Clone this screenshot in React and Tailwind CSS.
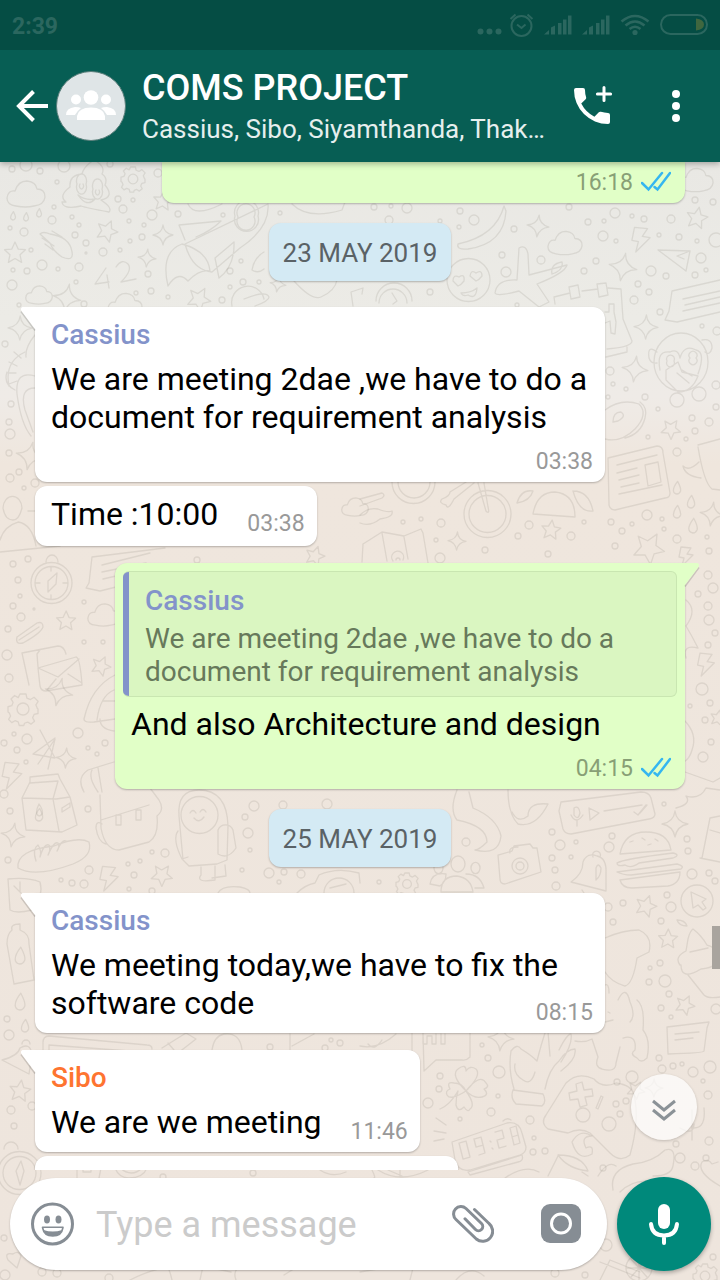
import React from "react";

/* ---------- wallpaper ---------- */

const circles = [
  [12, 169, 3], [26, 165, 6], [40, 171, 3], [64, 166, 6], [110, 164, 3], [57, 182, 2], [158, 173, 4],
  [54, 207, 2], [118, 199, 3], [133, 200, 2], [123, 209, 4], [52, 220, 4], [72, 217, 2], [79, 225, 2],
  [10, 228, 2], [24, 232, 4], [75, 235, 3], [31, 250, 2], [86, 243, 3], [86, 253, 1], [103, 252, 4],
  [129, 221, 2], [144, 225, 2], [130, 241, 2], [142, 237, 3], [120, 250, 2], [42, 265, 5], [79, 267, 4],
  [58, 269, 2], [13, 270, 2], [27, 271, 3], [12, 285, 5], [76, 282, 2], [148, 274, 3], [136, 293, 2],
  [151, 291, 3], [168, 297, 2], [222, 300, 3], [223, 215, 2], [152, 215, 5], [178, 214, 3], [230, 271, 3],
  [241, 261, 2], [243, 282, 3], [230, 287, 2], [259, 282, 2], [280, 213, 2], [19, 305, 2], [84, 304, 3],
  [374, 207, 3], [391, 206, 2], [407, 208, 5], [389, 220, 4], [440, 221, 2], [460, 211, 3], [474, 220, 5],
  [459, 227, 2], [514, 229, 3], [569, 207, 3], [588, 222, 3], [604, 221, 2], [615, 213, 5], [632, 216, 2],
  [644, 219, 3], [671, 219, 4], [695, 200, 3], [713, 202, 3], [603, 236, 5], [616, 241, 2], [659, 235, 2],
  [679, 237, 3], [697, 241, 2], [716, 240, 7], [502, 255, 3], [541, 260, 4], [506, 272, 5], [596, 261, 3],
  [584, 271, 3], [651, 271, 5], [666, 276, 3], [701, 258, 5], [706, 270, 2], [695, 275, 3], [638, 284, 3],
  [649, 292, 3], [634, 300, 4], [660, 312, 3], [702, 326, 2], [717, 331, 4], [430, 292, 3], [517, 305, 2],
  [610, 371, 4], [613, 384, 2], [626, 389, 2], [645, 397, 3], [608, 397, 2], [658, 409, 2], [716, 407, 3],
  [692, 418, 3], [709, 422, 4], [648, 437, 2], [686, 439, 2], [695, 431, 3], [677, 452, 4], [716, 385, 4],
  [5, 344, 3], [11, 404, 3], [9, 422, 3], [10, 434, 5], [9, 453, 3], [19, 472, 3], [10, 478, 4], [24, 488, 2],
  [35, 483, 4], [13, 564, 3], [28, 559, 3], [18, 580, 3], [20, 596, 2], [13, 606, 3], [34, 609, 1],
  [21, 617, 4], [8, 629, 3], [84, 602, 2], [84, 642, 2], [103, 642, 2], [7, 655, 5], [9, 678, 4], [78, 733, 5],
  [27, 739, 5], [14, 734, 2], [17, 750, 3], [4, 743, 3], [88, 748, 2], [105, 743, 3], [97, 754, 2], [26, 762, 2],
  [4, 794, 4], [10, 811, 3], [88, 809, 3], [197, 560, 3], [403, 522, 2], [421, 519, 2], [441, 523, 4],
  [436, 540, 2], [485, 550, 3], [518, 536, 3], [529, 525, 4], [571, 536, 4], [584, 522, 2], [611, 522, 3],
  [622, 531, 3], [632, 524, 2], [647, 515, 5], [662, 519, 2], [664, 529, 2], [677, 539, 4], [615, 546, 3],
  [548, 554, 3], [440, 558, 5], [707, 537, 2], [709, 551, 3], [708, 575, 4], [713, 588, 5], [698, 594, 3],
  [708, 606, 4], [709, 620, 5], [715, 633, 3], [708, 645, 3], [702, 689, 6], [710, 703, 3], [690, 706, 2],
  [705, 720, 3], [711, 742, 3], [703, 757, 5], [254, 806, 5], [245, 817, 3], [248, 833, 5], [250, 850, 2],
  [283, 805, 4], [327, 804, 5], [152, 852, 2], [165, 853, 4], [140, 861, 2], [128, 864, 2], [134, 875, 3],
  [89, 870, 4], [61, 880, 2], [72, 883, 3], [84, 884, 4], [129, 889, 2], [152, 891, 3], [242, 870, 2],
  [269, 873, 5], [301, 874, 4], [284, 872, 3], [279, 882, 2], [8, 860, 3], [466, 842, 4], [552, 832, 3],
  [560, 845, 5], [576, 842, 2], [552, 858, 3], [571, 857, 2], [555, 870, 3], [556, 886, 4], [609, 847, 5],
  [612, 836, 3], [664, 804, 2], [687, 839, 3], [688, 851, 3], [692, 874, 5], [709, 873, 3], [715, 881, 3],
  [379, 882, 2], [608, 907, 4], [623, 903, 3], [671, 907, 5], [667, 895, 3], [661, 921, 3], [613, 922, 3],
  [660, 963, 3], [650, 968, 2], [649, 982, 3], [665, 981, 6], [669, 994, 3], [661, 1008, 3], [671, 1017, 2],
  [716, 1009, 5], [7, 1019, 3], [9, 1035, 5], [331, 1040, 2], [340, 1043, 3], [325, 1048, 3], [270, 1047, 3],
  [482, 1045, 2], [488, 1058, 3], [499, 1072, 6], [440, 1076, 3], [439, 1089, 3], [428, 1103, 5],
  [498, 1096, 2], [491, 1112, 4], [530, 1120, 4], [460, 1119, 2], [534, 1138, 2], [533, 1152, 3], [545, 1151, 3],
  [659, 1058, 3], [662, 1069, 4], [673, 1066, 3], [682, 1064, 2], [693, 1072, 5], [710, 1067, 6], [632, 1077, 6],
  [617, 1082, 3], [703, 1081, 2], [708, 1095, 4], [616, 1104, 3], [626, 1101, 3], [620, 1114, 3], [709, 1141, 4],
  [676, 1144, 3], [706, 1158, 3], [680, 1158, 5], [695, 1166, 4], [603, 1168, 3], [11, 1110, 4], [14, 1126, 3],
  [32, 1106, 4], [253, 1173, 3], [163, 1177, 3], [4, 1238, 3], [5, 1275, 5], [42, 1272, 4], [57, 1273, 4],
  [109, 1278, 4], [606, 1245, 6], [555, 1273, 4], [585, 1275, 3], [713, 1257, 3],
];

const stars = [
  [15, 253, 11], [107, 231, 11], [163, 201, 10], [199, 299, 12], [697, 218, 11], [671, 429, 10], [315, 556, 10],
  [66, 621, 10], [101, 666, 10], [551, 530, 10], [649, 548, 16], [718, 718, 8], [162, 875, 11], [646, 906, 11],
  [668, 939, 10], [685, 1005, 10], [20, 1091, 11], [636, 1090, 9],
];

const sparkles = [
  [163, 235, 10], [147, 258, 9], [67, 298, 14], [20, 328, 12], [538, 226, 11], [623, 267, 14], [646, 327, 12],
  [635, 369, 13], [30, 456, 14], [457, 541, 9], [712, 514, 12], [59, 692, 14], [66, 758, 10], [13, 835, 12],
  [675, 824, 13], [501, 1038, 13], [278, 284, 8], [654, 1088, 9],
];

const clouds = [
  [26, 194, 20], [39, 295, 14], [565, 243, 18], [696, 180, 18], [355, 507, 14], [104, 615, 17], [125, 305, 18],
];

const bolts = [[641, 239, 13], [12, 775, 14], [109, 878, 13], [706, 664, 12], [686, 556, 10]];

const gears = [[133, 179, 12], [23, 709, 15], [407, 884, 11], [705, 1276, 12]];

const drops = [
  [13, 216, 4], [26, 217, 4], [39, 213, 4], [677, 488, 6], [677, 512, 6], [691, 502, 6], [693, 526, 7],
  [39, 815, 6], [20, 956, 8], [20, 1002, 8], [25, 1026, 6],
];

const drawings = [
  // smiling swirl
  "M66 202q-8-6 4-15q-1-12 12-13q2-8 12-14q12 6 8 14q6 4 3 11q10 12-4 15q12 8 8 12q-22-4-28-6q-18 4-19-4z M77 184a5 7 0 1 0 9 0a5 7 0 1 0-9 0 M93 189a5 7 0 1 0 9 0a5 7 0 1 0-9 0 M80 184a2 3 0 1 0 3 0 M96 190a2 3 0 1 0 3 0 M78 195q8 6 17 4q-8 9-17-4",
  // mitten
  "M40 234q3-3 10 0q20 3 22 18q2 10-10 5q-9-6-12-14z M42 238l12 8 M45 244l8 6 M52 231l10 6",
  // 42
  "M106 268l-11 16 14-2 M107 275l2 13 M116 267q6-9 12-3q5 6-7 18l15-3",
  // rocket
  "M185 240l-6-15 42-4q-10 10-25 16 M268 204q2 24-28 44l-28 24q-20-2-27-28z M238 217a9 9 0 1 0 16 0a9 9 0 1 0-16 0 M235 216a12 12 0 1 0 23 0a12 12 0 1 0-23 0 M234 242l-19 16 4 20q16-12 15-36 M182 244q-22 8-14 42q10-16 20-5q12-12 22-10q-2-20-28-27 M188 204q6 14 34 0 M292 204q16 16 50 6l3-8",
  // banana
  "M504 206q-8 30-46 38q-2 6 10 5q36-5 38-38z",
  // heart-eyed face
  "M447 280a21 21 0 1 0 43 0a21 21 0 1 0-43 0 M453 281q0-7 6-4q6-4 5 4q-3 4-6 5z M470 276q1-7 6-3q6-4 6 3q-3 4-6 5z M461 293q10 0 16-5q-1 12-9 7q-5 2-7-2",
  // plane
  "M517 280l2-32q7-4 9 6l1 21 38-10q-2 8-30 19l12 18-10 5-20-16q-22 6-24 2q2-14 22-13z M552 274q-2-10 10-12q2 8-10 12",
  // calendar
  "M555 304l-1-7 16-4 M582 291l16-2 M608 288l13 1 2 30 9 22q0 6-25 8 M569 287l9-2 2 12-9 2z M597 284l9-1 2 12-9 2z M605 312h4v-8h5v8l2 10-1 12-4-1-1-12-5 2 M606 357l21-5v-5",
  // speech note
  "M720 280l-48 11-3 20-4 9 12 2 43-10 M683 299l37-8 M685 305l35-8 M683 311l37-8",
  // monkey
  "M654 362a27 29 0 1 0 54 0a27 29 0 1 0-54 0 M657 352q-10-8-8 6q2 6 8 5 M702 340q10-2 10 8q-2 8-7 4 M660 370q-4-20 10-18q8-4 10 6q4-14 16-8q10 2 2 24 M667 361a4 4 0 1 0 7 0a4 4 0 1 0-7 0 M690 358a4 4 0 1 0 6 0a4 4 0 1 0-6 0 M666 380l12 12q14 0 20-16l-16-4-4-10-12 8z M677 373l12 10 M682 370l10 6 M670 400a7 7 0 1 0 14 0a7 7 0 1 0-14 0 M692 394a7 7 0 1 0 14 0a7 7 0 1 0-14 0",
  // paper dart
  "M658 250l32 1-4 20z M690 251l-13 5 7 3",
  // planet
  "M232 306a16 16 0 0 1 32-7 M244 299q22-9 25-2q0 4-14 9",
  // heart and alarm clock
  "M294 281q18 20 27 16q14-6 16-17 M376 301a18 18 0 0 1 36 0 M379 303a14 14 0 0 1 28 0 M392 293l5 8-4 3 M353 306l-2-14 12-4-1 6 M252 270q2-12 12-18 M252 270q6 4 12-1",
  // doughnut
  "M605 410q16-12 34-6q10 10-4 25q-14 14-30 10 M613 422q0-10 8-10q6 4-3 9z M640 402q8 6 5 16q-4 16-20 20",
  // newspaper
  "M608 458l49-12q6 0 6 7l7 40q0 5-5 5l-50 12q-5 0-6-5z M617 465l40-10 M617 473l20-5 M619 480l20-5 M621 487l18-4 M645 465l13-3 3 20-13 4z M619 494l43-9",
  // mug
  "M698 445l22-6 M698 447q6 36 14 42l8 1 M701 478q-16-2-18-12q6 6 16-4",
  // left edge: striped coil, pot, person
  "M35 335q-10 12-9 22 M9 386q-5-24 16-34 M7 372q-4 12 8 18 M14 352l7 6 M9 362l8 4 M8 373h8 M9 384l8-3 M35 376q-20-6-18 18q4 30 14 42 M35 388q-16 0-10 22l8 22 M3 508a9 11 0 1 1 19 0q-3 12-9 12q-8 0-10-12 M0 552l60-6 26-22 M0 540q4-14 18-18q14 2 18 24 M28 511h8",
  // bike and tools
  "M392 482a21 21 0 0 0 43 0 M398 482a16 16 0 0 0 32 0 M464 514a23 23 0 1 0 47 0a23 23 0 1 0-47 0 M469 514a18 18 0 1 0 37 0a18 18 0 1 0-37 0 M478 483l8 28q4 4 2-4l-4-24 M466 482l-16 10q0 4-8 7q-4 4 4 6q2 6 8-6l20-16 M360 499l22-6q4 2 0 5l-22 8 M360 515q8-8 18-6q10 4 14 2q2 6-12 8q-10 8-20 4",
  // sunrise
  "M533 514q4-22 22-22q20 2 20 25z M517 503q4-14 16-12q-3 10-16 12 M573 491q16 0 20 20q-14 2-20-20",
  // map
  "M362 562l1-18 19-12 22 4 17-7 2 4 5 30 M382 533l5 28 M404 537l4 22 M393 561a6 6 0 1 1 10-1 M396 560a2 2 0 1 1 4 0",
  // compass
  "M31 583a20 20 0 1 0 41 0a20 20 0 1 0-41 0 M35 583a16 16 0 1 0 33 0a16 16 0 1 0-33 0 M46 562a6 7 0 1 1 12 0 M57 573l-9 8 0 11 8-8z M51 567v4 M51 595v4 M36 583h4 M63 583h4",
  // speech bubble
  "M165 548l-73 9-3 26-3 5 14 3 16-4 M102 565l48-12 M102 572l44-9 M103 579l26-6",
  // clip and envelopes
  "M17 637l20-14q6-2 6 4q-2 6-20 16q-8 2-6-6z M19 640l20-13 M38 667l-1-13 3-4 M29 685l-7-32 36-7q6 0 8 8 M38 668l38-11q4 0 6 28l-36 6q-5 0-6-5z M38 668l20 9 21-18 M47 690l9-11 M82 683l-14-9",
  // shuttle
  "M115 675q-24 12-31 44q0 4 10 3l21-3 M114 690q-14 6-17 30 M100 719q0 10 14 12 M103 701h12",
  // bluetooth
  "M40 730l15 28-22-4 22-16 M38 764l17-25-7 30",
  // milk carton
  "M22 798l8-16v-5l28-3 2 5 10 18 7 28-15 7-36-2z M22 798l34 1 14-2 M30 783l28-2-5 18 6 32 M39 804q-5 10 0 12q7-2 0-12 M62 808l8-5v4l-8 5z",
  // backpack
  "M84 792q-8-14 4-22l26-8 M92 770q-4 8 6 22 M100 795l1 33q4 22 18 22l30-8q10-6 8-26q8-6 2-16l-12-16 M101 820l48-15 M102 824q-6-4-6 4q2 14 10 16 M116 815h5v10h-5z M136 810h5v10h-5z M98 768l4 24",
  // astronaut
  "M181 815a18 18 0 1 0 37 0a18 18 0 1 0-37 0 M179 816q-2-26 20-26q28 0 29 36l-1 34-10 4-28 2-6-6z M190 813q3-5 6 0 M200 812q3-5 6 0 M194 818q5 6 10-1 M218 830a8 8 0 0 1 15 0l3 18q-8 12-18 6z M178 831q-6 8 4 28l6-2 M201 867v8q-6 8 14 5v-14 M212 878l14-2-1-11",
  // bread
  "M18 868q-2-18 36-22q24-10 35-4q4 14-16 22q-38 14-55 4z M36 861q-4-12 2-16q4 6 2 12q4-14 9-12q2 6-1 10q6-14 10-12q2 4-1 8q5-12 9-10",
  // leaf and bottle
  "M8 879q20-2 32 3q4 14-8 28q-16 4-22 0z M14 886l14 14 M20 882v10 M12 930q-2-6 8-6v6q10 4 9 14l5 36-20 4-7-40q0-10 5-14z",
  // bell and laptop
  "M2 1060q16-4 18-12q10-6 12 6l-3 20z M22 1044a4 4 0 1 1 8 0 M43 1050l0-7q0-7 6-7l98 9q5 0 5 4 M49 1050v-5l80 6",
  // bandage and pear
  "M162 1048l24-15 10 6-18 14 M168 1043l6 7 M212 1050q2-14 12-16q16-2 18 16 M290 1050v-16 M292 1046l22-12",
  // ufo
  "M218 893q4-8 22-6q10 2 10 6 M297 893q8-8 18-10l4-8q18-8 40-2l1 10 M324 893a14 14 0 0 1 30 0 M330 888l16-4",
  // dinosaur and whale
  "M457 790q-8 20 0 30q30 6 30 22q-8 8-12 8q24 6 26-14q-4-18-28-28l-4-16 M508 790q0 24 10 34q18 4 30-20q-20-2-20 12q-10 8-16-4",
  // voice note
  "M559 811l2-9 80-10q8 0 10 6l4 16q0 4-6 5l-78 15q-6 0-8-5z M574 808q5-3 6 5q-2 8-6 2z M571 815q5 10 12 0 M577 820v6 M589 808l10 5-9 7z M604 811l38-6 M634 812l4 3 8-10 M640 813l7-8",
  // camera
  "M498 855l14-4 2-5 16-2 3 4 4 0 4 24-36 12q-5 0-5-5z M512 866a8 8 0 1 0 16 0a8 8 0 1 0-16 0 M516 866a4 4 0 1 0 8 0a4 4 0 1 0-8 0 M510 853q-2-6 8-6",
  // group
  "M441 892q0-16 16-16q14 2 16 16z M451 864a7 8 0 1 0 14 0a7 8 0 1 0-14 0 M434 868a4 5 0 1 0 9 0a4 5 0 1 0-9 0 M471 868a4 5 0 1 0 9 0a4 5 0 1 0-9 0 M430 884q2-12 16-10q0 8-6 12z M466 874q14 0 18 14l-9 0",
  // bell
  "M571 882q12-8 12-20q4-10 14-6q10 2 9 18v17z M593 857a4 4 0 1 1 7 0 M596 868q2-6 5 0q0 8-5 12z M582 890q4 8 10 4",
  // burger
  "M620 854q4-22 26-22q22 0 25 18z M617 863q6-4 56-10q8 2 0 5l-34 5q-8 6-14 2q-8 2-8-2 M617 872l60-8q8 2 4 5l-50 6q-8 0-14-3 M620 880l60-8q0 12-12 14l-36 2q-10 0-12-8 M630 842l3-1 M642 838l3 2 M655 839l3 2 M648 845l3-1",
  // cursor badge
  "M681 901a16 16 0 1 0 32 0a16 16 0 1 0-32 0 M691 892l2 16 5-3 5 5 3-2-4-6 4-3z",
  // boat and cup at the right edge
  "M685 772l28 10 7-4 M676 808q16-4 10-12q14 4 20-8l14 2 M702 858l8-40 10-2 M700 858l20 4 M710 830l10 3",
  // tree at the right edge
  "M686 600q12 10 0 26q6 10 12 22q-16-4-12 10 M684 720q14 14 8 30q-2 8-8 12",
  // balloon, dog
  "M605 938q18-8 34-8q14 6 10 22l-12 6q-4 26-12 28q-14-4-20-14 M605 985q4-2 4 8 M618 1000q8-16 12 2q6 14 0 20 M575 1041q10 2 17-2l6 18q-4 10 4 12q14 4 14-6l4-16 M637 1000q8 6 6 30q8 10 4 28q-6 6-10 0q-8-4-2-8q2-16-12-12 M608 1012l2 1 M613 1020l-8 2",
  // ice cream
  "M680 965q-6-8 6-14l2-12q2-8 5-10q8 6 14 16q14 4 6 12q8 10-12 12q-20 12-20-4 M688 975l16 20q4 4 16 2 M690 952l18-4 M677 920q8 0 10 6q-8 0-10-6",
  // note
  "M667 1027l42-5-2 6-3 23q0 2-36 3z M675 1034l24-2 M675 1040l18-2",
  // speech bubble HI
  "M412 1033v20 M470 1033v24q-4 4-8 3h-26l-12 11-1-38 M423 1034v10h4v-8h5v8h4v-10 M441 1034v10h4v-10 M360 1046q18 4 36-12 M368 1044q6 8 14-4",
  // clover
  "M466 1091q-16-16-8-22q8-6 8 2q4-6 10-2q6 6-10 22q14-18 20-8q4 4-2 6q6 6-2 8q-8 2-16-6q10 14 4 18q-2 4-6-2q-6 6-8-2q0-8 2-14q-8 14-18 18 M466 1091q-16 10-19 4q-2-4 3-6q-4-8 4-6q8 0 12 8",
  // hand with flower
  "M514 1089q-6-20-3-38q6-8 10-2q10 6 16 12q4-16 8-28 M515 1064q-2 10 8 16q8 6 12-8 M545 1089q4-20 14-28q8-12 16-12q2 10-14 22 M559 1050q8-16 12-16q2 10-10 28 M513 1090l30 4q4 8-1 12l-26-2q-6-6-3-14 M548 1032l2 24",
  // game pad
  "M548 1129q-8-6-2-14l20-32q12-12 28-4q8 10 22 4q16 2 18 12q6 24-4 60q-10 8-20-2l-20-20q-10-6-22 0z M576 1084l6-2 2 8 8-1 1 7-8 1 2 8-7 2-2-8-8 1-1-7 8-2z M576 1115a7 7 0 1 0 14 0a7 7 0 1 0-14 0 M602 1124a7 7 0 1 0 14 0a7 7 0 1 0-14 0 M603 1097l-5 12-2-1 5-12z",
  // digital clock body
  "M452 1142l55-19q12-2 15 10l4 14q0 6-6 8l-50 15q-12 2-15-10z M468 1172l54-17q2 6-4 7l-48 13z M436 1118l10 7 M434 1131l12 2 M434 1141l10-2 M503 1121q4-4 8-1",
  // digits 09:28
  "M459 1143l7-2 4 16-7 2z M474 1139l7-2 4 16-6 2 M474 1139l2 8 7-2 M490 1141l1 1 M492 1148l1 1 M495 1132l7-2 2 8-7 2 2 8 7-2 M510 1128l6-2 4 17-6 2z M512 1137l6-2",
  // fish and jar
  "M572 1142q8-14 20-6q-12 0-6 12q8-4 6 6q-14 8-20-12 M558 1155q24 0 30 16q-20-2-30-16 M558 1156l-10 20 M582 1172l6 4",
  // cactus under the round button
  "M692 1110v30 M680 1128q14 8 14-4 M704 1108q2 20-10 20",
  // flamingo
  "M613 1190q-4-20 20-26q20-2 32-14q12-4 8 16q-2 10-20 10 M620 1192q14-14 34-10 M616 1166q-8-6-18 10",
  // heart right
  "M720 1186q-24-14-18-24q6-4 10 2l6-2",
  // compass lower left
  "M-2 1173a20 20 0 1 0 43 0a20 20 0 1 0-43 0 M3 1173a15 15 0 1 0 33 0a15 15 0 1 0-33 0 M21 1161l-5 10 4 14 4-14z M4 1149a7 7 0 1 1 14 0",
  // castle and wheels above the composer
  "M77 1178v-10h6v4h8v-4h10l-2 10 M115 1168q4 10 14 10q14 0 18-10 M120 1168q12 10 22 0 M372 1170q4 8 2 8 M378 1170q22 14 50 0 M400 1168v8 M388 1170l14 6 M320 1170q12 8 26 2 M505 1178q20-14 34-6",
  // doodles below the composer
  "M8 1260q-4-8 5-6q6-4 8 2l-4 12z M130 1280q20-10 34-12q4-6 8 12 M200 1280l3-14q18 4 28 6 M236 1280q-4-10 6-14 M284 1275l16-10 M360 1272l60-10 M410 1280l3-12 80-8 M456 1280q14-16 28-4 M600 1280l10-20 30 12 M600 1262l40 16",
  "M626 1268a13 13 0 1 0 26 0a13 13 0 1 0-26 0 M639 1256v24 M627 1268h24 M631 1259l16 18 M647 1259l-16 18",
];

function Wallpaper() {
  return (
    <svg
      className="absolute inset-0 h-full w-full"
      viewBox="0 162 720 1118"
      preserveAspectRatio="xMidYMin slice"
      fill="none"
      stroke="#8b8578"
      strokeOpacity="0.18"
      strokeWidth="1.3"
      strokeLinecap="round"
      strokeLinejoin="round"
      aria-hidden="true"
    >
      <defs>
        <linearGradient id="sky" x1="0" y1="0" x2="0" y2="1">
          <stop offset="0" stopColor="#e9e8e4" />
          <stop offset="0.14" stopColor="#ecebe6" />
          <stop offset="0.21" stopColor="#efebe7" />
          <stop offset="0.27" stopColor="#efe6dd" />
          <stop offset="1" stopColor="#eee5dd" />
        </linearGradient>
      </defs>
      <rect x="0" y="162" width="720" height="1118" fill="url(#sky)" stroke="none" />
      {circles.map(([x, y, r], i) => (
        <circle key={i} cx={x} cy={y} r={r} />
      ))}
      {stars.map(([x, y, r], i) => (
        <path
          key={i}
          vectorEffect="non-scaling-stroke"
          transform={`translate(${x} ${y}) rotate(${(i * 23) % 40}) scale(${r / 10})`}
          d="M0-10L3-3.5 9.5-3 4.6 1.6 6 8.5 0 5-6 8.5-4.6 1.6-9.5-3-3-3.5z"
        />
      ))}
      {sparkles.map(([x, y, r], i) => (
        <path
          key={i}
          vectorEffect="non-scaling-stroke"
          transform={`translate(${x} ${y}) rotate(${(i * 5) % 14}) scale(${r / 10})`}
          d="M0-10Q1-1.500 10 0Q1.500 1.500 0 10Q-1.500 1.500-10 0Q-1-1.500 0-10z"
        />
      ))}
      {clouds.map(([x, y, r], i) => (
        <path
          key={i}
          vectorEffect="non-scaling-stroke"
          transform={`translate(${x} ${y}) scale(${r / 10})`}
          d="M-5 6Q-9.500 5.500-9.500 2Q-9-2-5.500-1.500Q-4-6.500.5-6.500Q5-6 5.500-2.500Q9.500-2.500 9.500 1.500Q9 5.500 4 6Q0 7-5 6z"
        />
      ))}
      {bolts.map(([x, y, r], i) => (
        <path
          key={i}
          vectorEffect="non-scaling-stroke"
          transform={`translate(${x} ${y}) scale(${r / 10})`}
          d="M-5-9L5-8 1-2 7-1-4 10-2 2-7 1z"
        />
      ))}
      {gears.map(([x, y, r], i) => (
        <g key={i} transform={`translate(${x} ${y}) scale(${r / 10})`}>
          <path
            vectorEffect="non-scaling-stroke"
            d="M-2-10h4l.6 2.700 2.400 1 2.400-1.500 2.700 2.700-1.500 2.400 1 2.400L10 0v3l-2.600.6-1 2.200 1.300 2.300-2.400 2-2.200-1.400-2.100.8L.5 11h-3l-.7-2.400-2.100-.8-2.200 1.300-2.100-2.200 1.300-2.200-.8-2L-10 2v-3.500l2.500-.7.900-2.200-1.400-2.300 2.400-2.300L-3.200-7.600z"
          />
          <circle vectorEffect="non-scaling-stroke" cx="0" cy="0" r="4" />
        </g>
      ))}
      {drops.map(([x, y, r], i) => (
        <path
          key={i}
          vectorEffect="non-scaling-stroke"
          transform={`translate(${x} ${y}) scale(${r / 10})`}
          d="M1-11Q7 0 6 5Q4 10 0 10Q-6 9-6 4Q-6-2 1-11z"
        />
      ))}
      {drawings.map((d, i) => (
        <path key={i} d={d} />
      ))}
    </svg>
  );
}

/* ---------- status bar ---------- */

function StatusBar() {
  return (
    <div className="flex h-[50px] items-center justify-between bg-[#054d44] pr-3 pl-3 text-[#2b675f]">
      <span className="pt-1 text-[23px] leading-7 font-bold">2:39</span>
      <svg className="h-[50px] w-[234px]" viewBox="474 0 234 50" fill="none" stroke="currentColor" aria-hidden="true">
        <g fill="currentColor" stroke="none">
          <circle cx="480.500" cy="31.500" r="3" />
          <circle cx="489.500" cy="31.500" r="3" />
          <circle cx="498.500" cy="31.500" r="3" />
          {[0, 38].map((dx) => (
            <g key={dx} transform={`translate(${dx} 0)`}>
              <path d="M544 34.500l5-4.500v4.500z" />
              <path d="M551 27.500l4-2v9h-4zM558 23h3.500v11.500h-3.500zM563 19.500h3.500v15h-3.500zM568 15.500h3.500v19h-3.500z" />
            </g>
          ))}
          <circle cx="635" cy="32.500" r="2.600" />
        </g>
        <circle cx="521.500" cy="26" r="10" strokeWidth="2" />
        <path d="M517 24.500l4.500 3.500 4-3.500M510.500 19l5-4.500M532.500 19l-5-4.500" strokeWidth="2" />
        <path d="M621.500 21.500q13.500-11 27 0M625.500 25.500q9.500-8 19 0M629.500 29q5.500-4.500 11 0" strokeWidth="2.600" />
        <rect x="661" y="15" width="46" height="19" rx="9.500" strokeWidth="2" />
        <path d="M696 18.500q8 1 8 6t-8 6z" fill="#40673f" stroke="none" />
      </svg>
    </div>
  );
}

/* ---------- header ---------- */

function Header() {
  return (
    <header className="flex h-28 items-center bg-[#075e54] text-white">
      <button type="button" aria-label="Back" className="flex items-center pl-3.5">
        <svg className="h-9 w-9" viewBox="0 0 36 36" fill="none" stroke="currentColor" strokeWidth="4">
          <path d="M34 18H5M19.500 3.500L5 18l14.500 14.500" />
        </svg>
        <svg className="ml-1.5 size-[70px]" viewBox="0 0 70 70" aria-hidden="true">
          <circle cx="35" cy="35" r="34.500" fill="#dfe5e7" stroke="#5b7f7b" strokeWidth="1" />
          <g fill="#fff">
            <circle cx="35" cy="26.500" r="7.300" />
            <circle cx="20" cy="28.500" r="5" />
            <circle cx="50" cy="28.500" r="5" />
            <path d="M21 49v-4q1.500-8.500 14-8.500t14 8.500v4zM10 44q0-7 9-8 4 0 6 1-4 3-6 7zM60 44q0-7-9-8-4 0-6 1 4 3 6 7z" />
          </g>
        </svg>
      </button>
      <div className="min-w-0 flex-1 pl-4">
        <h1 className="truncate text-4xl leading-[42px] font-medium">COMS PROJECT</h1>
        <p className="mt-1 truncate text-[26px] leading-8 text-[#e6efee]">Cassius, Sibo, Siyamthanda, Thak…</p>
      </div>
      <button type="button" aria-label="Group call" className="shrink-0">
        <svg className="h-12 w-12" viewBox="0 0 24 24" fill="currentColor">
          <path d="M20 15.500c-1.250 0-2.450-.2-3.570-.57a1.020 1.020 0 0 0-1.020.24l-2.200 2.200a15.070 15.070 0 0 1-6.590-6.580l2.200-2.210c.28-.27.36-.66.25-1.010A11.360 11.360 0 0 1 8.500 4a1 1 0 0 0-1-1H4a1 1 0 0 0-1 1 17 17 0 0 0 17 17 1 1 0 0 0 1-1v-3.500a1 1 0 0 0-1-1z" />
          <path d="M18 2.700v6.600M14.700 6h6.600" fill="none" stroke="currentColor" strokeWidth="1.500" strokeLinecap="round" />
        </svg>
      </button>
      <button type="button" aria-label="More options" className="mr-5 ml-9 shrink-0">
        <svg className="h-12 w-12" viewBox="0 0 48 48" fill="currentColor">
          <circle cx="24" cy="12" r="4" />
          <circle cx="24" cy="24" r="4" />
          <circle cx="24" cy="36" r="4" />
        </svg>
      </button>
    </header>
  );
}

/* ---------- conversation ---------- */

function Ticks() {
  return (
    <svg className="h-6 w-[30px]" viewBox="0 0 30 24" fill="none" stroke="#35b6f0" strokeWidth="2.500" aria-label="Read">
      <path d="M1 12l6.500 6.500L21 2M13.500 16l3 2.500L29 2" strokeLinecap="round" />
    </svg>
  );
}

function Tail({ mine }) {
  return mine ? (
    <svg className="absolute top-0 -right-[15px] h-6 w-4" viewBox="0 0 16 24" aria-hidden="true">
      <path d="M1 23.500L15 4.500" stroke="#000" strokeOpacity="0.15" strokeWidth="1.500" />
      <path d="M0 0h13.500q2.500 1 1 4L1 22H0z" fill="#e1ffc7" />
    </svg>
  ) : (
    <svg className="absolute top-0 -left-[15px] h-6 w-4" viewBox="0 0 16 24" aria-hidden="true">
      <path d="M15 23.500L1 4.500" stroke="#000" strokeOpacity="0.15" strokeWidth="1.500" />
      <path d="M16 0H2.500Q0 1 1.500 4L15 22h1z" fill="#fff" />
    </svg>
  );
}

function Day({ children }) {
  return (
    <li className="mt-5 self-center rounded-xl bg-[#d4eaf4] px-3.5 pt-[15px] pb-[13px] text-[26px] leading-[30px] text-[#5a6266] shadow-[0_1px_2px_rgba(0,0,0,0.25)]">
      {children}
    </li>
  );
}

const bubble = "relative max-w-[570px] shadow-[0_1px_2px_rgba(0,0,0,0.25)]";
const authorText = "text-[28px] leading-[34px] font-medium";
const bodyText = "text-[32px] leading-[38px]";
const timeText = "text-[23px] leading-[30px]";

/* layout: "below" puts the time on its own row, "corner" at the end of the last line, "beside" next to the text */
function Incoming({ author, color, text, time, layout, className }) {
  const stamp = <time className={`${timeText} text-[#999]`}>{time}</time>;
  return (
    <li
      className={`${bubble} self-start bg-white pr-3 pl-4 ${
        author ? "rounded-xl rounded-tl-none pt-[11px] pb-[5px]" : "rounded-xl pt-[9px] pb-[7px]"
      } ${className}`}
    >
      {author && <Tail />}
      {author && <p className={`mb-2 ${authorText} ${color}`}>{author}</p>}
      {layout === "below" && (
        <>
          <p className={bodyText}>{text}</p>
          <div className="flex justify-end pt-[11px]">{stamp}</div>
        </>
      )}
      {layout === "corner" && (
        <div className="flow-root">
          <span className={bodyText}>{text}</span>
          <span className="float-right mt-3.5 flex">{stamp}</span>
        </div>
      )}
      {layout === "beside" && (
        <div className="flex items-end justify-between gap-[29px]">
          <p className={`pb-1.5 ${bodyText}`}>{text}</p>
          <div className="flex">{stamp}</div>
        </div>
      )}
    </li>
  );
}

function SentMeta({ time }) {
  return (
    <div className="flex items-center justify-end gap-2 pr-3.5 pb-[5px]">
      <time className={`${timeText} text-[#889f76]`}>{time}</time>
      <Ticks />
    </div>
  );
}

function Conversation() {
  return (
    <main className="relative min-h-0 flex-1 overflow-hidden">
      <ul className="flex h-full flex-col overflow-hidden px-[35px]">
        <li className={`${bubble} w-[523px] self-end rounded-b-xl bg-[#e1ffc7] pt-1.5`}>
          <SentMeta time="16:18" />
        </li>

        <Day>23 MAY 2019</Day>
        <Incoming
          className="mt-[26px]"
          author="Cassius"
          color="text-[#8393ca]"
          text="We are meeting 2dae ,we have to do a document for requirement analysis"
          time="03:38"
          layout="below"
        />
        <Incoming className="mt-1" text="Time :10:00" time="03:38" layout="beside" />

        <li className={`${bubble} mt-[17px] self-end rounded-xl rounded-tr-none bg-[#e1ffc7] pt-2`}>
          <Tail mine />
          <blockquote className="mx-2 flex overflow-hidden rounded-md border border-l-0 border-[#c9e6b1] bg-[#daf6c1]">
            <span className="w-1.5 shrink-0 bg-[#8393ca]" />
            <div className="pt-3 pr-4 pb-2 pl-4">
              <p className={`mb-1 ${authorText} text-[#8393ca]`}>Cassius</p>
              <p className="text-[28px] leading-[33px] text-[#67795b]">
                We are meeting 2dae ,we have to do a document for requirement analysis
              </p>
            </div>
          </blockquote>
          <p className={`px-4 pt-2 pb-[11px] ${bodyText}`}>And also Architecture and design</p>
          <SentMeta time="04:15" />
        </li>

        <Day>25 MAY 2019</Day>
        <Incoming
          className="mt-[26px]"
          author="Cassius"
          color="text-[#8393ca]"
          text="We meeting today,we have to fix the software code"
          time="08:15"
          layout="corner"
        />
        <Incoming
          className="mt-[17px]"
          author="Sibo"
          color="text-[#fe7430]"
          text="We are we meeting"
          time="11:46"
          layout="beside"
        />
        <li className={`${bubble} mt-1 h-16 w-[423px] shrink-0 self-start rounded-t-xl bg-white`} aria-hidden="true" />
      </ul>

      <span className="absolute top-[764px] right-0 h-[43px] w-2 bg-[#a9a49e]" aria-hidden="true" />
      <button
        type="button"
        aria-label="Scroll to latest"
        className="absolute right-[23px] bottom-[30px] flex size-[66px] items-center justify-center rounded-full bg-white/70 shadow-[0_1px_3px_rgba(0,0,0,0.2)]"
      >
        <svg className="size-8" viewBox="0 0 32 32" fill="none" stroke="#8b9297" strokeWidth="3">
          <path d="M5 10l11 9 11-9M5 19l11 9 11-9" />
        </svg>
      </button>
    </main>
  );
}

/* ---------- composer ---------- */

function Composer() {
  return (
    <form className="relative flex items-center gap-2.5 pt-[7px] pr-[9px] pb-[9px] pl-2.5" onSubmit={(e) => e.preventDefault()}>
      <div className="flex h-[92px] min-w-0 flex-1 items-center rounded-full bg-white pr-5 pl-5 shadow-[0_1px_2px_rgba(0,0,0,0.25)]">
        <button type="button" aria-label="Emoji" className="shrink-0">
          <svg className="size-[46px]" viewBox="0 0 46 46" fill="none" stroke="#868d94" strokeWidth="3">
            <circle cx="22.500" cy="23" r="20" />
            <ellipse cx="17" cy="18.500" rx="3" ry="4" fill="#868d94" stroke="none" />
            <ellipse cx="28.500" cy="18.500" rx="3" ry="4" fill="#868d94" stroke="none" />
            <path d="M12.500 26.300h20.500" strokeWidth="1.600" strokeLinecap="round" />
            <path d="M12.500 26.500q1.500 8.500 10.300 8.500T33 26.500" strokeWidth="1.600" />
            <path d="M13.500 29q9.300 3 18.600 0-2.300 6-9.300 6t-9.300-6z" fill="#868d94" stroke="none" />
          </svg>
        </button>
        <input
          type="text"
          aria-label="Message"
          placeholder="Type a message"
          className="ml-5 min-w-0 flex-1 bg-transparent pt-0.5 text-4xl leading-[42px] text-black outline-none placeholder:text-[#cbcbcb]"
        />
        <button type="button" aria-label="Attach" className="mr-[47px] shrink-0">
          <svg className="h-10 w-[42px]" viewBox="0 0 42 40" fill="none" stroke="#868d94" strokeWidth="3" strokeLinecap="round">
            <path d="M22.500 5.500l14.500 14a9 9 0 0 1-12.700 15.500L4 15.500A7 7 0 0 1 14 4.500L29.500 19.500a4.200 4.200 0 0 1-6 6L13 14.800" />
          </svg>
        </button>
        <button type="button" aria-label="Camera" className="mr-1.5 shrink-0">
          <svg className="size-10" viewBox="0 0 40 40">
            <rect width="40" height="39" rx="9" fill="#868d94" />
            <circle cx="20" cy="19.500" r="9.500" fill="none" stroke="#fff" strokeWidth="3" />
          </svg>
        </button>
      </div>
      <button
        type="button"
        aria-label="Record voice message"
        className="flex size-[94px] shrink-0 items-center justify-center rounded-full bg-[#00897b] shadow-[0_2px_4px_rgba(0,0,0,0.3)]"
      >
        <svg className="size-12" viewBox="0 0 48 48" fill="none" stroke="#fff" strokeWidth="4" strokeLinecap="round">
          <rect x="18" y="4" width="12" height="25" rx="6" fill="#fff" stroke="none" />
          <path d="M11 24q1 11.500 13 11.500T37 24M24 36v7" />
        </svg>
      </button>
    </form>
  );
}

export default function App() {
  return (
    <div className="flex h-screen flex-col overflow-hidden bg-[#eee5dd] font-[Roboto,sans-serif] text-black">
      <div className="relative z-10 shadow-[0_2px_6px_rgba(0,0,0,0.3)]">
        <StatusBar />
        <Header />
      </div>
      <div className="relative flex min-h-0 flex-1 flex-col">
        <Wallpaper />
        <Conversation />
        <Composer />
      </div>
    </div>
  );
}
